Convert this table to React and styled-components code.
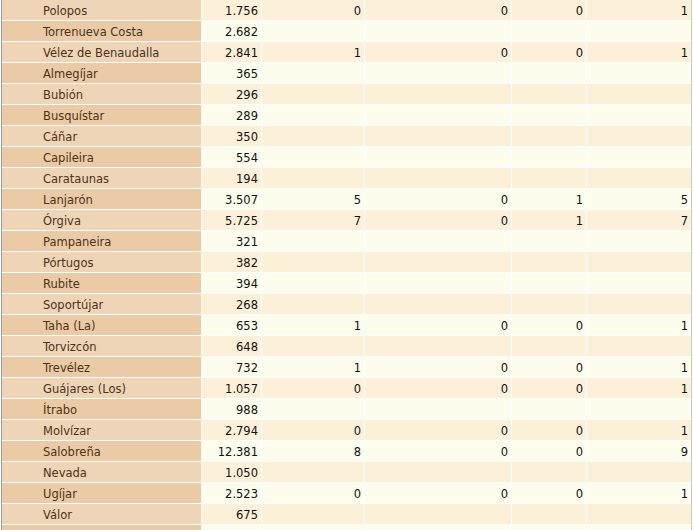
import React from "react";
import styled, { createGlobalStyle } from "styled-components";

const GlobalStyle = createGlobalStyle`
  html, body {
    margin: 0;
    padding: 0;
    background: #ffffff;
  }
`;

const TableFrame = styled.div`
  margin-left: 1px;
  width: 689px;
  border-left: 1px solid #9c9c9c;
  border-right: 1px solid #c8c8c8;
  display: grid;
  row-gap: 1px;
  font-family: "DejaVu Sans", Verdana, sans-serif;
  font-size: 11.5px;
`;

const Row = styled.div`
  display: grid;
  grid-template-columns: 199px 59px 102px 146px 74px 104px;
  column-gap: 1px;
  height: 20px;
`;

const NameCell = styled.div`
  background: ${(p) => (p.$alt ? "#ebcba6" : "#eed5b8")};
  color: #4e3218;
  padding: 2px 0 0 41px;
  display: flex;
  align-items: center;
  white-space: nowrap;
`;

const NumCell = styled.div`
  background: ${(p) => (p.$alt ? "#fdfdee" : "#fcf0d8")};
  color: #111111;
  padding: 2px 3px 0 0;
  display: flex;
  align-items: center;
  justify-content: flex-end;
`;

const rows = [
  ["Polopos", "1.756", "0", "0", "0", "1"],
  ["Torrenueva Costa", "2.682"],
  ["Vélez de Benaudalla", "2.841", "1", "0", "0", "1"],
  ["Almegíjar", "365"],
  ["Bubión", "296"],
  ["Busquístar", "289"],
  ["Cáñar", "350"],
  ["Capileira", "554"],
  ["Carataunas", "194"],
  ["Lanjarón", "3.507", "5", "0", "1", "5"],
  ["Órgiva", "5.725", "7", "0", "1", "7"],
  ["Pampaneira", "321"],
  ["Pórtugos", "382"],
  ["Rubite", "394"],
  ["Soportújar", "268"],
  ["Taha (La)", "653", "1", "0", "0", "1"],
  ["Torvizcón", "648"],
  ["Trevélez", "732", "1", "0", "0", "1"],
  ["Guájares (Los)", "1.057", "0", "0", "0", "1"],
  ["Ítrabo", "988"],
  ["Molvízar", "2.794", "0", "0", "0", "1"],
  ["Salobreña", "12.381", "8", "0", "0", "9"],
  ["Nevada", "1.050"],
  ["Ugíjar", "2.523", "0", "0", "0", "1"],
  ["Válor", "675"],
  [""],
];

export default function App() {
  return (
    <>
      <GlobalStyle />
      <TableFrame>
        {rows.map(([name, ...nums], i) => {
          const alt = i % 2 === 1;
          return (
            <Row key={i}>
              <NameCell $alt={alt}>{name}</NameCell>
              {[0, 1, 2, 3, 4].map((j) => (
                <NumCell key={j} $alt={alt}>
                  {nums[j] || ""}
                </NumCell>
              ))}
            </Row>
          );
        })}
      </TableFrame>
    </>
  );
}
